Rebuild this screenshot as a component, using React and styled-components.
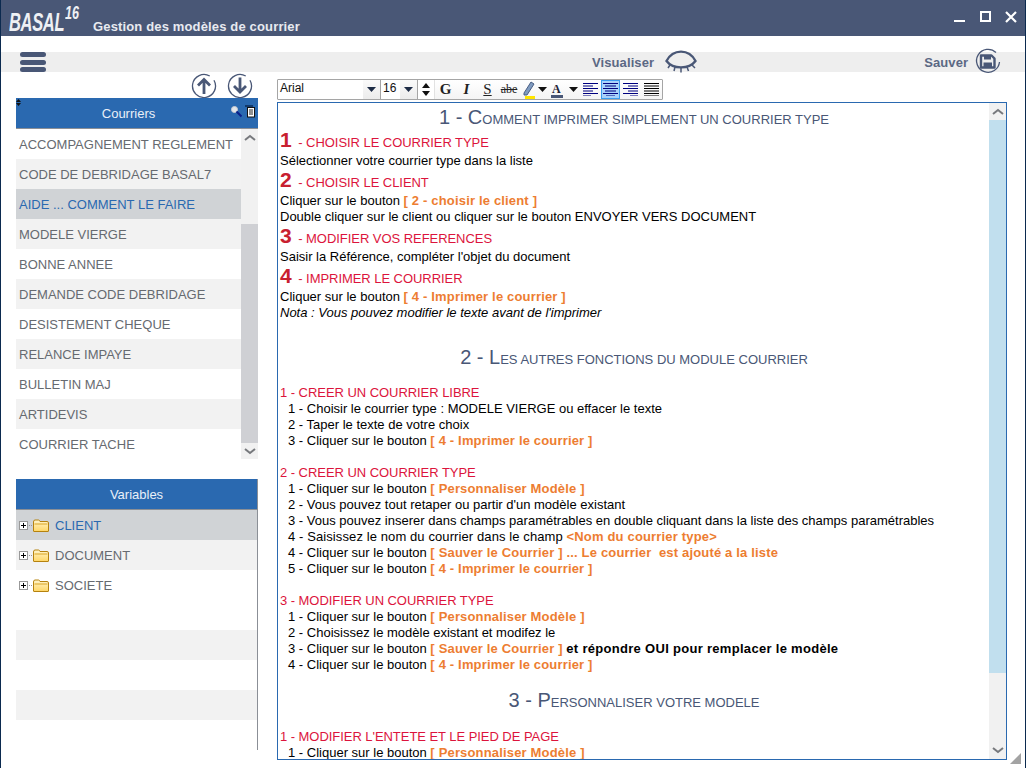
import React from "react";
import styled, { createGlobalStyle } from "styled-components";

const Global = createGlobalStyle`
  html, body { margin: 0; padding: 0; height: 768px; overflow: hidden; background: #fff; }
  body { font-family: "Liberation Sans", Arial, sans-serif; }
  * { box-sizing: border-box; }
`;

const Win = styled.div`
  width: 1026px; height: 768px; position: relative; overflow: hidden; background: #fff;
  border-left: 1px solid #0b2a4f; border-right: 1px solid #0b2a4f;
  display: flex; flex-direction: column;
`;
const TitleBar = styled.header`
  height: 36px; flex: none; background: #495776; color: #fff; display: flex; align-items: flex-start;
  padding-left: 8px; position: relative;
`;
const Logo = styled.div`
  width: 84px; height: 36px; flex: none; display: flex; align-items: flex-start; color: #eef0f4;
  font-style: italic; font-weight: 700;
`;
const LogoName = styled.span`
  font-size: 25px; line-height: 25px; margin-top: 10px; display: inline-block; transform: scaleX(.66); transform-origin: left;
  width: 56px; letter-spacing: -.5px;
`;
const LogoNum = styled.span`
  font-size: 19px; line-height: 19px; margin-top: 3px; display: inline-block; transform: scaleX(.66); transform-origin: left;
`;
const WinTitle = styled.div`
  font-size: 13px; font-weight: 700; letter-spacing: .15px; color: #e8eaf0; margin-top: 19px; line-height: 15px;
`;
const WinBtns = styled.div`
  margin-left: auto; display: flex; gap: 14px; padding: 11px 8px 0 0;
`;
const ToolStrip = styled.div`
  height: 20px; margin-top: 16px; flex: none; background: #eeeeee; display: flex; align-items: center;
  padding-left: 19px; position: relative;
`;
const Burger = styled.div`
  width: 26px; height: 20px; display: flex; flex-direction: column; justify-content: space-between;
`;
const BurgerBar = styled.span`
  display: block; height: 5px; border-radius: 3px; background: #495776;
`;
const StripLabel = styled.span`
  font-size: 13px; font-weight: 700; color: #5b6884; margin-left: ${p => p.$ml}px; letter-spacing: .1px;
`;
const StripIcon = styled.svg`
  margin-left: ${p => p.$ml}px; flex: none; overflow: visible;
`;
const Main = styled.div`
  display: grid; grid-template-columns: 242px 730px; column-gap: 19px; padding-left: 15px; flex: 1; min-height: 0;
`;
const LeftCol = styled.aside`
  display: flex; flex-direction: column; min-height: 0;
`;
const ArrowRow = styled.div`
  height: 26px; display: flex; justify-content: flex-end; gap: 10px; padding: 1px 5px 0 0; align-items: flex-start;
`;
const PanelHead = styled.div`
  height: 31px; background: #2a69b0; color: #e9f0f8; font-size: 13px; text-align: center; line-height: 31px;
  border-bottom: 1px solid #8b8f96; position: relative; flex: none;
  padding-right: ${p => p.$pr || 0}px;
`;
const SortMark = styled.svg`
  position: absolute; left: 0; top: 1px;
`;
const HeadIcons = styled.div`
  position: absolute; right: 3px; top: 7px; display: flex; gap: 3px;
`;
const ListWrap = styled.div`
  display: flex; height: 330px; flex: none;
`;
const List = styled.div`
  width: 225px; flex: none;
`;
const Row = styled.div`
  height: 30px; line-height: 32px; font-size: 13px; padding-left: 3px; white-space: nowrap; overflow: hidden;
  color: ${p => (p.$sel ? "#2a69b0" : "#666a70")};
  background: ${p => (p.$sel ? "#d0d3d6" : p.$alt ? "#f2f2f2" : "#fff")};
`;
const VScroll = styled.div`
  width: ${p => p.$w}px; flex: none; background: #f1f1f1; display: flex; flex-direction: column; position: relative;
`;
const ScrollArrow = styled.div`
  height: ${p => p.$h}px; flex: none; display: flex; align-items: center; justify-content: center;
`;
const ScrollSpace = styled.div`
  flex: ${p => (p.$grow ? 1 : "none")}; height: ${p => (p.$h ? p.$h + "px" : "auto")};
`;
const ScrollThumb = styled.div`
  height: ${p => p.$h}px; flex: none; background: ${p => p.$c};
`;
const VarPanel = styled.div`
  margin-top: 20px; border-right: 1px solid #8b8f96; height: 271px; flex: none;
`;
const VarRow = styled.div`
  height: 30px; display: flex; align-items: center; padding-left: 3px; font-size: 13px;
  color: ${p => (p.$sel ? "#2a69b0" : "#666a70")};
  background: ${p => (p.$sel ? "#d0d3d6" : p.$alt ? "#f2f2f2" : "#fff")};
`;
const VarText = styled.span`
  margin-left: 6px;
`;
const RightCol = styled.section`
  display: flex; flex-direction: column; min-height: 0;
`;
const FmtBar = styled.div`
  margin-top: 7px; height: 21px; width: 386px; flex: none; border: 1px solid #a5a5a5; border-radius: 1px; display: flex; align-items: center; background: linear-gradient(#fff, #f4f4f4);
`;
const Combo = styled.div`
  width: ${p => p.$w}px; height: 19px; flex: none; display: flex; align-items: center; justify-content: space-between;
  font-size: 12px; padding: 0 0 0 2px; border-right: 1px solid #a5a5a5; color: #111; background: #fff;
`;
const ComboText = styled.span`
  padding-bottom: 3px;
`;
const ComboBtn = styled.span`
  width: 17px; height: 19px; flex: none; display: flex; align-items: center; justify-content: center;
  background: linear-gradient(#fafafa, #ececec);
`;
const Spin = styled.div`
  width: 17px; height: 19px; flex: none; display: flex; flex-direction: column; align-items: center; justify-content: center; gap: 3px;
  border-right: 1px solid #e2e2e2; background: #fff;
`;
const Fb = styled.div`
  width: ${p => p.$w || 21}px; height: 19px; flex: none; display: flex; align-items: center; justify-content: center;
  font-family: ${p => (p.$serif ? '"Liberation Serif", serif' : "inherit")};
  font-size: ${p => p.$fs || 13}px; font-weight: ${p => (p.$b ? 700 : 400)}; font-style: ${p => (p.$i ? "italic" : "normal")};
  text-decoration: ${p => p.$d || "none"}; color: #222;
  background: ${p => (p.$on ? "#a9d2fb" : "transparent")};
  border: ${p => (p.$on ? "1px solid #3b9bf0" : "none")};
`;
const Editor = styled.div`
  margin-top: 2px; height: 658px; flex: none; border: 1px solid #2a69b0; display: flex; background: #fff; width: 730px;
`;
const Doc = styled.div`
  flex: 1; min-width: 0; overflow: hidden; padding-left: 2px; color: #000;
`;
const H = styled.div`
  color: #495776; font-size: 20px; text-align: center; line-height: 24px; white-space: nowrap;
  height: ${p => p.$h}px; padding-top: ${p => p.$t}px; padding-right: 1px;
`;
const Sm = styled.span`
  font-size: 13px; line-height: 0;
`;
const Step = styled.div`
  height: 24px; padding-top: 2px; line-height: 24px; font-size: 13px; color: #dc143c; white-space: nowrap; letter-spacing: -.05px;
`;
const Num = styled.span`
  font-size: 21px; line-height: 0; font-weight: 700; color: #c8202f; margin-right: 3px; letter-spacing: 0;
`;
const T = styled.div`
  height: 16px; line-height: 16px; font-size: 13px; white-space: nowrap;
  padding-left: ${p => (p.$in ? 8 : 0)}px; font-style: ${p => (p.$it ? "italic" : "normal")};
  letter-spacing: ${p => p.$ls || 0}px;
`;
const Red = styled.div`
  height: 16px; line-height: 16px; font-size: 13px; color: #dc143c; white-space: nowrap; letter-spacing: -.05px;
`;
const O = styled.span`
  color: #ed7d31; font-weight: 700; letter-spacing: .17px;
`;
const B = styled.b`
  font-weight: 700; letter-spacing: .3px;
`;
const Gap = styled.div`
  height: ${p => p.$h}px;
`;
const Grip = styled.svg`
  position: absolute; right: 4px; bottom: 4px;
`;

const Chevron = ({ up, c = "#77797d" }) => (
  <svg width="12" height="7" viewBox="0 0 12 7">
    <path d={up ? "M1 6 L6 2 L11 6" : "M1 1 L6 5 L11 1"} fill="none" stroke={c} strokeWidth="2" />
  </svg>
);
const Caret = ({ c = "#1d2b45" }) => (
  <svg width="9" height="5" viewBox="0 0 9 5"><path d="M0 0H9L4.500 5Z" fill={c} /></svg>
);
const CircleArrow = ({ up }) => (
  <svg width="26" height="26" viewBox="0 0 26 26">
    <path d="M22.960 7.250A11.500 11.500 0 1 1 18.750 3.040" fill="none" stroke="#495776" strokeWidth="1.300" />
    {up
      ? <path d="M13 21 V6.500 M7 12.500 L13 6.500 L19 12.500" fill="none" stroke="#495776" strokeWidth="2.800" />
      : <path d="M13 4.500 V19 M7 13 L13 19 L19 13" fill="none" stroke="#495776" strokeWidth="2.800" />}
  </svg>
);
const Folder = () => (
  <svg width="16" height="13" viewBox="0 0 16 13">
    <defs>
      <linearGradient id="fold" x1="0" y1="0" x2="0" y2="1">
        <stop offset="0" stopColor="#fff6cf" />
        <stop offset="1" stopColor="#ffd664" />
      </linearGradient>
    </defs>
    <path d="M1 12.500Q.5 12.500 .5 12V3Q.5 1 2 1H5.500Q6.500 1 7 2.500H14Q15.500 2.500 15.500 4V12Q15.500 12.500 15 12.500Z" fill="url(#fold)" stroke="#b5820f" />
    <path d="M1.500 5H14.500" stroke="#d9a526" />
  </svg>
);
const Plus = () => (
  <svg width="14" height="9" viewBox="0 0 14 9">
    <rect x=".5" y=".5" width="8" height="8" fill="#fff" stroke="#999" />
    <path d="M2 4.500H7M4.500 2V7" stroke="#000" />
    <path d="M10 4.500H14" stroke="#999" strokeDasharray="1 1" />
  </svg>
);
const AlignIcon = ({ mode, color = "#000080" }) => {
  const rows = [0, 2.500, 5, 7.500, 10, 12.500];
  const geo = {
    left: [[0, 15], [0, 10], [0, 15], [0, 10], [0, 15], [0, 8]],
    center: [[0, 15], [2, 11], [0, 15], [2, 11], [0, 15], [3, 9]],
    right: [[0, 15], [5, 10], [0, 15], [5, 10], [0, 15], [7, 8]],
    full: [[0, 15], [0, 15], [0, 15], [0, 15], [0, 15], [0, 15]],
  }[mode];
  return (
    <svg width="15" height="13" viewBox="0 0 15 13">
      {rows.map((y, i) => <rect key={i} x={geo[i][0]} y={y} width={geo[i][1]} height="1" fill={color} />)}
    </svg>
  );
};

const courriers = ["ACCOMPAGNEMENT REGLEMENT", "CODE DE DEBRIDAGE BASAL7", "AIDE ... COMMENT LE FAIRE", "MODELE VIERGE", "BONNE ANNEE", "DEMANDE CODE DEBRIDAGE", "DESISTEMENT CHEQUE", "RELANCE IMPAYE", "BULLETIN MAJ", "ARTIDEVIS", "COURRIER TACHE"];
const vars = [["CLIENT", 1, 0], ["DOCUMENT", 0, 1], ["SOCIETE", 0, 0], ["", 0, 0], ["", 0, 1], ["", 0, 0], ["", 0, 1], ["", 0, 0]];

export default function App() {
  return (
    <>
      <Global />
      <Win>
        <TitleBar>
          <Logo><LogoName>BASAL</LogoName><LogoNum>16</LogoNum></Logo>
          <WinTitle>Gestion des modèles de courrier</WinTitle>
          <WinBtns>
            <svg width="12" height="12" viewBox="0 0 12 12"><rect x="0" y="9" width="11" height="2" fill="#fff" /></svg>
            <svg width="11" height="11" viewBox="0 0 11 11"><rect x="1" y="1" width="9" height="9" fill="none" stroke="#fff" strokeWidth="2" /></svg>
            <svg width="12" height="12" viewBox="0 0 12 12"><path d="M1 1L11 11M11 1L1 11" stroke="#fff" strokeWidth="2.200" /></svg>
          </WinBtns>
        </TitleBar>
        <ToolStrip>
          <Burger><BurgerBar /><BurgerBar /><BurgerBar /></Burger>
          <StripLabel $ml={546}>Visualiser</StripLabel>
          <StripIcon $ml={11} width="32" height="24" viewBox="0 0 32 24">
            <path d="M1.500 11C8 -1.500 24 -1.500 30.500 11C24 19.500 8 19.500 1.500 11Z" fill="none" stroke="#495776" strokeWidth="2.400" />
            <path d="M5 15L3 18M10 17L9 21M16 17.500V22.500M22 17L23.500 21M27 15L30 18" stroke="#495776" strokeWidth="1.500" />
          </StripIcon>
          <StripLabel $ml={227}>Sauver</StripLabel>
          <StripIcon $ml={7} width="26" height="26" viewBox="0 0 26 26">
            <path d="M21 3.500A11.500 11.500 0 1 0 24.500 13" fill="none" stroke="#495776" strokeWidth="1.300" />
            <path d="M6 6.500H16.500L19.500 9.500V18.500H6Z" fill="none" stroke="#495776" strokeWidth="2.400" strokeLinejoin="round" />
            <rect x="9" y="6" width="7" height="4.500" fill="#495776" />
            <rect x="8.500" y="13.500" width="8.500" height="5" fill="#495776" />
          </StripIcon>
        </ToolStrip>
        <Main>
          <LeftCol>
            <ArrowRow><CircleArrow up /><CircleArrow /></ArrowRow>
            <PanelHead $pr={17}>
              <SortMark width="5" height="7" viewBox="0 0 5 7"><path d="M0 3L2.500 0L5 3ZM0 4L2.500 7L5 4Z" fill="#111" /></SortMark>
              Courriers
              <HeadIcons>
                <svg width="11" height="13" viewBox="0 0 11 13">
                  <circle cx="3.500" cy="4.500" r="3" fill="#e4e6ea" stroke="#c9ccd2" />
                  <path d="M5.500 6.500L10.500 11.500" stroke="#0a1f8a" strokeWidth="2" />
                </svg>
                <svg width="10" height="13" viewBox="0 0 10 13">
                  <path d="M0 1H8" stroke="#0a2a55" strokeWidth="1.500" />
                  <rect x="2.500" y="2.500" width="7" height="9.500" fill="#fff" stroke="#111" />
                  <path d="M4 5H8M4 7H8M4 9H8" stroke="#222" />
                </svg>
              </HeadIcons>
            </PanelHead>
            <ListWrap>
              <List>
                {courriers.map((c, i) => <Row key={c} $sel={i === 2} $alt={i % 2 === 1}>{c}</Row>)}
              </List>
              <VScroll $w={17}>
                <ScrollArrow $h={16}><Chevron up /></ScrollArrow>
                <ScrollSpace $h={79} />
                <ScrollThumb $h={219} $c="#cfd0d4" />
                <ScrollSpace $grow />
                <ScrollArrow $h={16}><Chevron /></ScrollArrow>
              </VScroll>
            </ListWrap>
            <VarPanel>
              <PanelHead>Variables</PanelHead>
              {vars.map(([v, s, a], i) => (
                <VarRow key={i} $sel={!!s} $alt={!!a}>
                  {v && <><Plus /><Folder /><VarText>{v}</VarText></>}
                </VarRow>
              ))}
            </VarPanel>
          </LeftCol>
          <RightCol>
            <FmtBar>
              <Combo $w={103}><ComboText>Arial</ComboText><ComboBtn><Caret /></ComboBtn></Combo>
              <Combo $w={37}><ComboText>16</ComboText><ComboBtn><Caret /></ComboBtn></Combo>
              <Spin>
                <svg width="8" height="5" viewBox="0 0 8 5"><path d="M0 5H8L4 0Z" fill="#111" /></svg>
                <svg width="8" height="5" viewBox="0 0 8 5"><path d="M0 0H8L4 5Z" fill="#111" /></svg>
              </Spin>
              <Fb $serif $b $fs={15}>G</Fb>
              <Fb $serif $i $b $fs={15}>I</Fb>
              <Fb $serif $d="underline" $fs={15}>S</Fb>
              <Fb $serif $d="line-through" $fs={12} $w={22}>abe</Fb>
              <Fb $w={16}>
                <svg width="15" height="18" viewBox="0 0 15 18">
                  <path d="M3 12L10 1L13 3L6 14L3 14Z" fill="#7f9bc0" stroke="#4a5f85" />
                  <rect x="4" y="15" width="10" height="3" fill="#ffe500" />
                </svg>
              </Fb>
              <Fb $w={13}><Caret c="#111" /></Fb>
              <Fb $w={17}>
                <svg width="13" height="16" viewBox="0 0 13 16">
                  <text x="1" y="11" fontSize="12" fontFamily="Liberation Serif" fontWeight="700" fill="#223">A</text>
                  <rect x="0" y="13" width="12" height="3" fill="#495776" />
                </svg>
              </Fb>
              <Fb $w={14}><Caret c="#111" /></Fb>
              <Fb><AlignIcon mode="left" /></Fb>
              <Fb $on $w={19}><AlignIcon mode="center" /></Fb>
              <Fb $w={21}><AlignIcon mode="right" /></Fb>
              <Fb $w={20}><AlignIcon mode="full" color="#000" /></Fb>
            </FmtBar>
            <Editor>
              <Doc>
                <H $h={26} $t={2}>1 - C<Sm>OMMENT IMPRIMER SIMPLEMENT UN COURRIER TYPE</Sm></H>
                <Step><Num>1</Num> - CHOISIR LE COURRIER TYPE</Step>
                <T>Sélectionner votre courrier type dans la liste</T>
                <Step><Num>2</Num> - CHOISIR LE CLIENT</Step>
                <T>Cliquer sur le bouton <O>[ 2 - choisir le client ]</O></T>
                <T>Double cliquer sur le client ou cliquer sur le bouton ENVOYER VERS DOCUMENT</T>
                <Step><Num>3</Num> - MODIFIER VOS REFERENCES</Step>
                <T>Saisir la Référence, compléter l'objet du document</T>
                <Step><Num>4</Num> - IMPRIMER LE COURRIER</Step>
                <T>Cliquer sur le bouton <O>[ 4 - Imprimer le courrier ]</O></T>
                <T $it>Nota : Vous pouvez modifier le texte avant de l'imprimer</T>

                <H $h={64} $t={24}>2 - L<Sm>ES AUTRES FONCTIONS DU MODULE COURRIER</Sm></H>
                <Red>1 - CREER UN COURRIER LIBRE</Red>
                <T $in>1 - Choisir le courrier type : MODELE VIERGE ou effacer le texte</T>
                <T $in>2 - Taper le texte de votre choix</T>
                <T $in>3 - Cliquer sur le bouton <O>[ 4 - Imprimer le courrier ]</O></T>
                <Gap $h={16} />
                <Red>2 - CREER UN COURRIER TYPE</Red>
                <T $in>1 - Cliquer sur le bouton <O>[ Personnaliser Modèle ]</O></T>
                <T $in>2 - Vous pouvez tout retaper ou partir d'un modèle existant</T>
                <T $in>3 - Vous pouvez inserer dans champs paramétrables en double cliquant dans la liste des champs paramétrables</T>
                <T $in $ls={0.1}>4 - Saisissez le nom du courrier dans le champ <O>&lt;Nom du courrier type&gt;</O></T>
                <T $in>4 - Cliquer sur le bouton <O>[ Sauver le Courrier ] ... Le courrier&nbsp; est ajouté a la liste</O></T>
                <T $in>5 - Cliquer sur le bouton <O>[ 4 - Imprimer le courrier ]</O></T>
                <Gap $h={16} />
                <Red>3 - MODIFIER UN COURRIER TYPE</Red>
                <T $in>1 - Cliquer sur le bouton <O>[ Personnaliser Modèle ]</O></T>
                <T $in>2 - Choisissez le modèle existant et modifez le</T>
                <T $in>3 - Cliquer sur le bouton <O>[ Sauver le Courrier ]</O> <B>et répondre OUI pour remplacer le modèle</B></T>
                <T $in>4 - Cliquer sur le bouton <O>[ 4 - Imprimer le courrier ]</O></T>
                <H $h={56} $t={15}>3 - P<Sm>ERSONNALISER VOTRE MODELE</Sm></H>
                <Red>1 - MODIFIER L'ENTETE ET LE PIED DE PAGE</Red>
                <T $in>1 - Cliquer sur le bouton <O>[ Personnaliser Modèle ]</O></T>
              </Doc>
              <VScroll $w={17}>
                <ScrollArrow $h={17}><Chevron up /></ScrollArrow>
                <ScrollThumb $h={553} $c="#c1dfee" />
                <ScrollSpace $grow />
                <ScrollArrow $h={17}><Chevron /></ScrollArrow>
              </VScroll>
            </Editor>
          </RightCol>
        </Main>
        <Grip width="11" height="11" viewBox="0 0 11 11"><path d="M11 0V11H0Z" fill="#a3a3a3" /></Grip>
      </Win>
    </>
  );
}
